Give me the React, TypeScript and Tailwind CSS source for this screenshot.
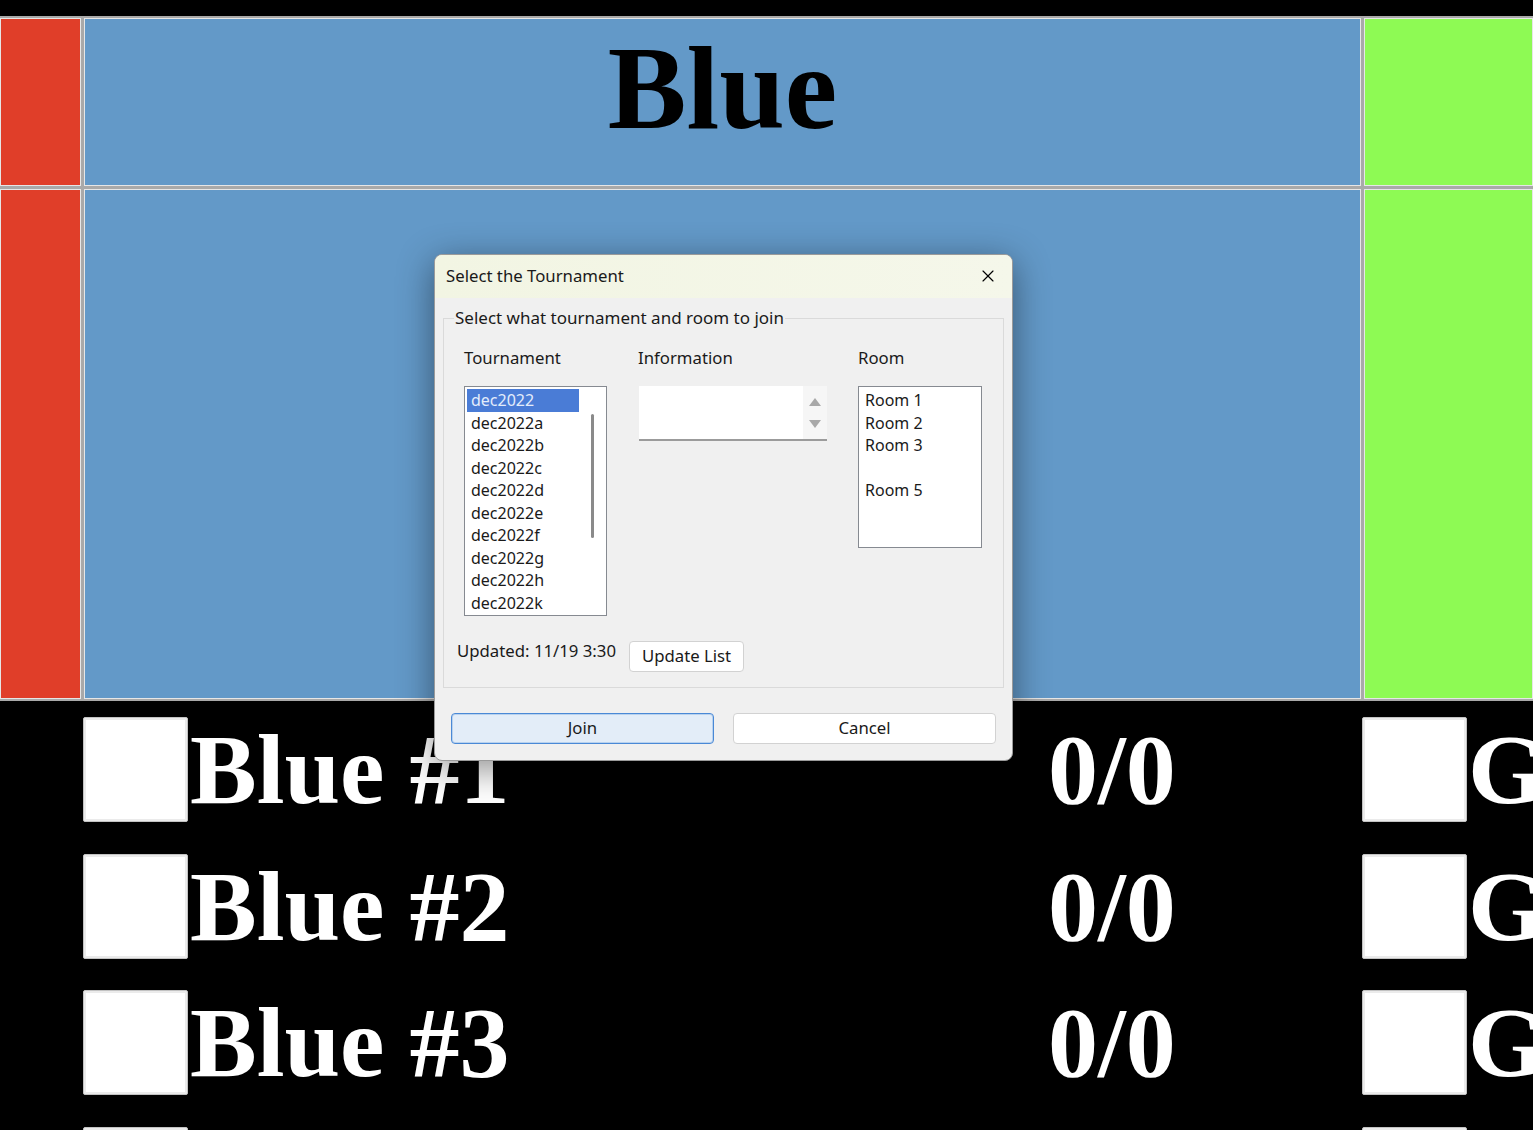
import { X } from "lucide-react";

const TOURNAMENTS = [
  "dec2022",
  "dec2022a",
  "dec2022b",
  "dec2022c",
  "dec2022d",
  "dec2022e",
  "dec2022f",
  "dec2022g",
  "dec2022h",
  "dec2022k",
  "dec2022m",
];

const ROOMS = ["Room 1", "Room 2", "Room 3", "", "Room 5"];

const PLAYERS = [
  { blue: "Blue #1", green: "Green #1" },
  { blue: "Blue #2", green: "Green #2" },
  { blue: "Blue #3", green: "Green #3" },
  { blue: "Blue #4", green: "Green #4" },
];

function Box() {
  return (
    <div className="h-[105px] w-[105px] shrink-0 rounded-[2px] border border-[#c2c2c2] bg-white shadow-[inset_0_0_0_2px_#ebebeb]" />
  );
}

function Scoreboard() {
  return (
    <>
      <div className="h-[16px]" />
      {/* team table */}
      <div className="bg-[#a9a9a9] py-[2px]">
        <div className="grid grid-cols-[81px_1277px_1fr] grid-rows-[168px_510px] gap-[3px]">
          <div className="border border-[#e6e6e6] bg-[#e03e29]" />
          <div className="border border-[#e6e6e6] bg-[#6399c8] pt-[2px] text-center font-['Liberation_Serif',serif] text-[118px] leading-[136px] font-bold text-black">
            Blue
          </div>
          <div className="border border-[#e6e6e6] bg-[#8efa54]" />
          <div className="border border-[#e6e6e6] bg-[#e03e29]" />
          <div className="border border-[#e6e6e6] bg-[#6399c8]" />
          <div className="border border-[#e6e6e6] bg-[#8efa54]" />
        </div>
      </div>

      {/* players */}
      <div className="pt-[16px] font-['Liberation_Serif',serif] text-[100px] leading-[105px] font-bold text-white">
        {PLAYERS.map((p) => (
          <div
            key={p.blue}
            className="grid h-[136.5px] grid-cols-[83px_1279px_1fr] whitespace-nowrap"
          >
            <div />
            <div className="grid grid-cols-[107px_858px_1fr] items-start">
              <Box />
              <div>{p.blue}</div>
              <div>0/0</div>
            </div>
            <div className="flex items-start gap-[1px] overflow-hidden">
              <Box />
              <div>{p.green}</div>
            </div>
          </div>
        ))}
      </div>
    </>
  );
}

function ListBox({
  items,
  selected,
  scroll,
  className,
}: {
  items: string[];
  selected?: number;
  scroll?: boolean;
  className: string;
}) {
  return (
    <div
      className={`relative overflow-hidden border border-[#868a91] bg-white pt-[2px] text-[16px] ${className}`}
    >
      {items.map((it, i) => (
        <div
          key={i}
          className={`h-[22.5px] leading-[22.5px] ${
            scroll ? "ml-[2px] mr-[27px] pl-[4px]" : "pl-[6px]"
          } ${i === selected ? "bg-[#4a7cd6] text-[#e3ecfb]" : "text-[#1a1a1a]"}`}
        >
          {it}
        </div>
      ))}
      {scroll && (
        <div className="absolute right-[12px] top-[27px] h-[124px] w-[3px] rounded-full bg-[#8a8a8a]" />
      )}
    </div>
  );
}

function TournamentDialog() {
  return (
    <div className="absolute left-[434px] top-[254px] flex h-[507px] w-[579px] flex-col overflow-hidden rounded-[8px] border border-[#9a9a9a] bg-[#f0f0f0] font-['Noto_Sans',sans-serif] text-[16.75px] text-[#1a1a1a] shadow-[0_8px_36px_rgba(0,0,0,0.45)]">
      <div className="flex h-[43px] shrink-0 items-center justify-between bg-gradient-to-r from-[#f2f5e3] to-[#f5f7ea] pb-[2px] pl-[11px] pr-[14px]">
        <span>Select the Tournament</span>
        <X size={20} strokeWidth={1.4} className="text-black" />
      </div>

      <div className="flex flex-1 flex-col px-[8px] pt-[9px]">
        <fieldset className="border border-[#dadada] px-[20px] pb-[15px]">
          <legend className="-ml-[10px] px-[1px] text-[17px] leading-[22px]">
            Select what tournament and room to join
          </legend>

          <div className="mt-[18px] grid grid-cols-[174px_220px_1fr] leading-[22px]">
            <span>Tournament</span>
            <span>Information</span>
            <span>Room</span>
          </div>

          <div className="mt-[17px] grid grid-cols-[175px_219px_1fr] items-start">
            <ListBox
              items={TOURNAMENTS}
              selected={0}
              scroll
              className="h-[230px] w-[143px]"
            />
            <div className="flex h-[55px] w-[188px] border-b-2 border-[#9b9b9b] bg-white">
              <div className="flex-1" />
              <div className="flex w-[24px] flex-col items-center justify-center gap-[14px] bg-[#f6f6f6]">
                <div className="h-0 w-0 border-x-[6px] border-b-[8px] border-x-transparent border-b-[#a8a8a8]" />
                <div className="h-0 w-0 border-x-[6px] border-t-[8px] border-x-transparent border-t-[#a8a8a8]" />
              </div>
            </div>
            <ListBox items={ROOMS} className="h-[162px] w-[124px]" />
          </div>

          <div className="-ml-[7px] mt-[24px] flex items-start gap-[13px]">
            <span className="leading-[22px]">Updated: 11/19 3:30</span>
            <button className="mt-[1px] h-[31px] w-[115px] rounded-[4px] border border-[#d2d2d2] bg-white leading-none">
              Update List
            </button>
          </div>
        </fieldset>

        <div className="mt-[25px] flex gap-[19px] px-[8px]">
          <button className="h-[31px] w-[264px] rounded-[4px] border border-[#4a89d6] bg-[#e3edf8] leading-none shadow-[inset_0_0_0_1px_#b9d2ee]">
            Join
          </button>
          <button className="h-[31px] w-[264px] rounded-[4px] border border-[#d2d2d2] bg-white leading-none">
            Cancel
          </button>
        </div>
      </div>
    </div>
  );
}

export default function App() {
  return (
    <div className="relative h-[1130px] w-[1533px] overflow-hidden bg-black">
      <Scoreboard />
      <TournamentDialog />
    </div>
  );
}
